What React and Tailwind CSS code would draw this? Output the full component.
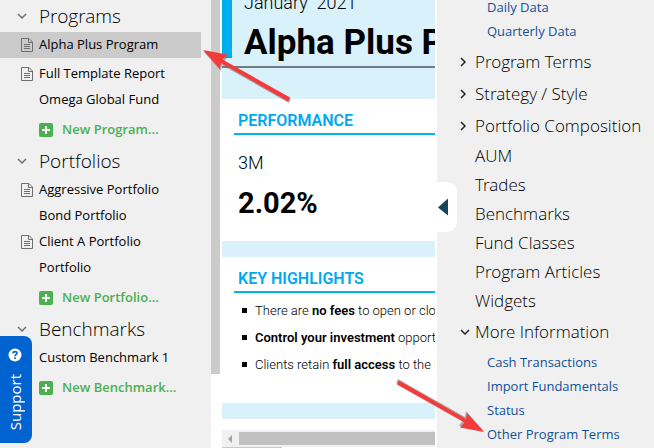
import React from 'react';

const GROUPS = [
  {
    title: 'Programs',
    add: 'New Program...',
    items: [
      { label: 'Alpha Plus Program', report: true, active: true },
      { label: 'Full Template Report', report: true },
      { label: 'Omega Global Fund' },
    ],
  },
  {
    title: 'Portfolios',
    add: 'New Portfolio...',
    items: [
      { label: 'Aggressive Portfolio', report: true },
      { label: 'Bond Portfolio' },
      { label: 'Client A Portfolio', report: true },
      { label: 'Portfolio' },
    ],
  },
  {
    title: 'Benchmarks',
    add: 'New Benchmark...',
    items: [{ label: 'Custom Benchmark 1' }],
  },
];

const DATA_LINKS = ['Daily Data', 'Quarterly Data'];
const SECTIONS = ['Program Terms', 'Strategy / Style', 'Portfolio Composition'];
const PAGES = ['AUM', 'Trades', 'Benchmarks', 'Fund Classes', 'Program Articles', 'Widgets'];
const MORE_LINKS = ['Cash Transactions', 'Import Fundamentals', 'Status', 'Other Program Terms'];

function Chevron({ className }) {
  return (
    <svg viewBox="0 0 10 10" className={className} fill="none" stroke="currentColor" strokeWidth="1.5">
      <path d="M1 3l4 4 4-4" />
    </svg>
  );
}

function FileIcon() {
  return (
    <svg viewBox="0 0 12 14" className="w-3 h-3.5" fill="none" stroke="#6e6e6e">
      <path d="M.5 .5h7.5l3.5 3.5v9.5h-11z" />
      <path d="M7.5 .5v4h4" />
      <path d="M3 6.5h6M3 8.5h6M3 10.5h6" />
    </svg>
  );
}

function PlusIcon() {
  return (
    <svg viewBox="0 0 14 14" className="w-3.5 h-3.5">
      <rect width="14" height="14" rx="2" fill="#4caf50" />
      <path d="M7 3v8M3 7h8" stroke="#fff" strokeWidth="2" />
    </svg>
  );
}

function Arrow({ className }) {
  return (
    <svg viewBox="0 0 90 54" className={className} aria-hidden="true">
      <path d="M2 3l24 4-4 6 67 37-2 4-67-38-1 6z" fill="#777" opacity=".6" />
      <path d="M1 1l24 4.500-4.500 5 67.500 38-2 4-67-38.500-1 6z" fill="#f43b3b" />
    </svg>
  );
}

function NavGroup({ title, items, add }) {
  return (
    <section>
      <button className="flex h-8 w-full items-center pl-[17px] gap-3 text-[19px] font-light font-['Open_Sans_Light','Open_Sans',sans-serif]">
        <Chevron className="w-2.5 h-2.5 text-[#6e6e6e]" />
        {title}
      </button>
      <ul className="text-[13px]">
        {items.map((item) => (
          <li key={item.label} className={item.active ? 'mb-[3px] mr-2.5 bg-[#cbcbcb]' : 'mr-2.5'}>
            <a href="#" className="flex h-[26px] items-center pl-[21px] gap-1.5">
              <span className="w-3">{item.report && <FileIcon />}</span>
              {item.label}
            </a>
          </li>
        ))}
      </ul>
      <button className="flex h-8 items-center pl-[39px] pt-0.5 gap-[9px] text-[13px] font-semibold text-[#4caf50]">
        <PlusIcon />
        {add}
      </button>
    </section>
  );
}

function LinkList({ links }) {
  return (
    <ul className="pl-[50px] text-[13px] text-[#10509a]">
      {links.map((link) => (
        <li key={link} className="h-6 leading-6">
          <a href="#">{link}</a>
        </li>
      ))}
    </ul>
  );
}

function Highlight({ children }) {
  return (
    <li className="flex items-center gap-2">
      <span className="w-[5px] h-[5px] shrink-0 bg-black" />
      <p>{children}</p>
    </li>
  );
}

function Report() {
  return (
    <main className="flex flex-1 min-w-0 flex-col overflow-hidden whitespace-nowrap bg-white mr-0.5 font-['Roboto',sans-serif]">
      <header className="h-[99px] bg-[#d9f1fb]">
        <div className="flex h-[58px] flex-col border-l-10 border-[#00aeef] pl-3">
          <p className="-mt-[9px] h-6 shrink-0 text-lg leading-6 font-light whitespace-pre">January  2021</p>
          <h1 className="h-14 shrink-0 text-[35px] leading-14 font-bold">Alpha Plus Program</h1>
        </div>
        <div className="mt-2 border-t-2 border-[#6d7d83]" />
      </header>

      <section className="h-[142px] pl-3 pt-2.5">
        <h2 className="h-[26px] border-b-2 border-[#00b4ec] pl-1 text-base leading-6 font-semibold text-[#00a9ee]">PERFORMANCE</h2>
        <p className="mt-4 pl-1 text-lg leading-6 font-light">3M</p>
        <p className="mt-2 pl-1 text-[29px] leading-10 font-bold">2.02%</p>
      </section>
      <div className="h-4 bg-[#d9f1fb]" />

      <section className="h-[146px] pl-3 pt-2.5">
        <h2 className="h-[26px] border-b-2 border-[#00b4ec] pl-1 text-base leading-6 font-semibold text-[#00a9ee]">KEY HIGHLIGHTS</h2>
        <ul className="mt-1 pl-2 text-[13px] leading-[27px] font-light">
          <Highlight>There are <b className="font-semibold">no fees</b> to open or close</Highlight>
          <Highlight><b className="font-semibold">Control your investment</b> opportunity</Highlight>
          <Highlight>Clients retain <b className="font-semibold">full access</b> to the investment</Highlight>
        </ul>
      </section>
      <div className="h-4 bg-[#d9f1fb]" />

      <div className="mt-[11px] flex h-[17px] items-center gap-[7px] bg-[#f1f1f1] pl-1.5">
        <svg viewBox="0 0 4 8" className="w-1 h-2" fill="#a3a3a3">
          <path d="M4 0v8L0 4z" />
        </svg>
        <div className="h-[13px] flex-1 bg-[#c1c1c1]" />
      </div>
      <div className="h-px w-[60px] bg-[#c9c9c9]" />
    </main>
  );
}

export default function App() {
  return (
    <div className="relative flex min-h-screen overflow-hidden bg-white text-black font-['Open_Sans',sans-serif]">
      <nav className="relative w-[211px] shrink-0 bg-[#f0f0f0]">
        {GROUPS.map((group) => (
          <NavGroup key={group.title} {...group} />
        ))}
        <Arrow className="absolute left-[202px] top-[49px] z-10 w-[90px] h-[54px]" />
      </nav>
      <div className="w-[11px] shrink-0">
        <div className="h-[374px] w-[9px] bg-[#cbcbcb]" />
      </div>

      <Report />

      <aside className="relative w-[217px] shrink-0 bg-[#f0f0f0]">
        <div className="-mt-[5px] mb-[3px]">
          <LinkList links={DATA_LINKS} />
        </div>
        <ul className="text-[17px] font-light font-['Open_Sans_Light','Open_Sans',sans-serif]">
          {SECTIONS.map((label) => (
            <li key={label}>
              <button className="flex h-8 items-center pl-[21px] gap-[7px]">
                <Chevron className="w-2.5 h-2.5 -rotate-90 text-[#222]" />
                {label}
              </button>
            </li>
          ))}
          {PAGES.map((label) => (
            <li key={label} className="h-[29px] pl-[38px] leading-7">
              <a href="#">{label}</a>
            </li>
          ))}
          <li>
            <button className="flex h-8 items-center pl-[23px] gap-[5px]">
              <Chevron className="w-2.5 h-2.5 text-[#222]" />
              More Information
            </button>
          </li>
        </ul>
        <div className="mt-0.5">
          <LinkList links={MORE_LINKS} />
        </div>
        <button aria-label="Collapse panel" className="absolute left-0 top-[182px] h-[50px] w-5 rounded-r-[10px] bg-white pl-px">
          <svg viewBox="0 0 10 18" className="w-2.5 h-[18px]" fill="#17455c">
            <path d="M10 .5v17L0 9.500z" />
          </svg>
        </button>
        <Arrow className="absolute -left-[42px] top-[379px] z-10 w-[90px] h-[54px] rotate-180" />
      </aside>

      <button className="absolute left-0 top-[336px] flex h-[107px] w-8 flex-col items-center gap-3 rounded-r-lg bg-[#0063cf] pt-3 pr-0.5 text-[15px] font-medium text-white">
        <svg viewBox="0 0 14 14" className="w-3.5 h-3.5" fill="none">
          <circle cx="7" cy="7" r="6.500" fill="#fff" />
          <path d="M5 5.500c0-2.500 4-2.500 4-.2C9 6.700 7 6.700 7 8.200M7 9.300v1.700" stroke="#0063cf" strokeWidth="1.600" />
        </svg>
        <span className="leading-6 [writing-mode:vertical-rl] rotate-180">Support</span>
      </button>
    </div>
  );
}
